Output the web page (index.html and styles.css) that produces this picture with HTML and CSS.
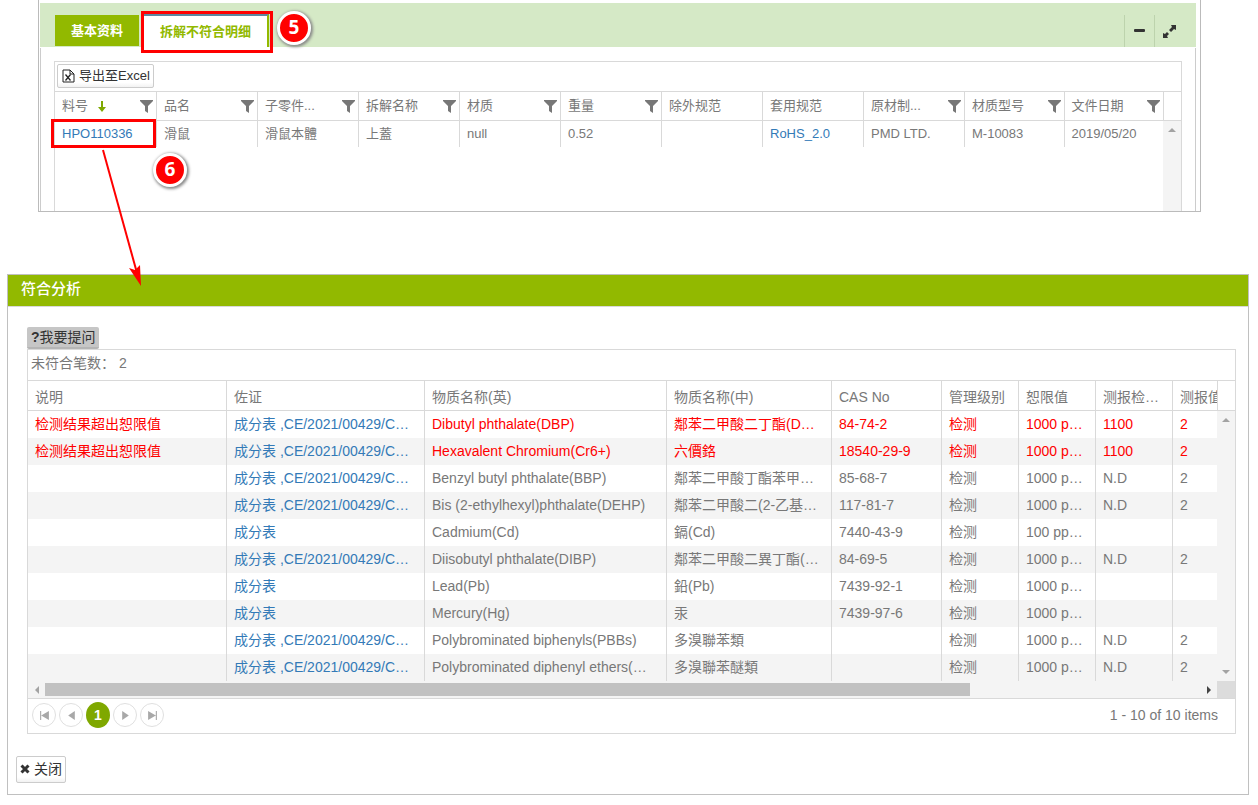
FILE: index.html
```html
<!DOCTYPE html>
<html lang="zh-CN">
<head>
<meta charset="utf-8">
<title>符合分析</title>
<link rel="stylesheet" href="styles.css">
</head>
<body>
<svg class="defs" aria-hidden="true">
  <symbol id="funnel" viewBox="0 0 13 13"><path d="M0 0h13v1L8 6v7L5 11V6L0 1z"/></symbol>
</svg>
<main class="page">
  <section class="detail">
    <header class="detail-head">
      <nav class="tabs">
        <button class="tab" type="button">基本资料</button>
        <button class="tab active" type="button">拆解不符合明细</button>
      </nav>
      <div class="tools">
        <button class="tool" type="button" aria-label="Minimize"><svg width="12" height="12" viewBox="0 0 12 12"><rect x="0" y="4" width="11" height="3" rx="1"/></svg></button>
        <button class="tool" type="button" aria-label="Expand"><svg width="13" height="13" viewBox="0 0 13 13"><path d="M8 0h5v5l-2-1-3 3-2-2 3-3zM5 13H0V8l2 1 2-2 2 2-2 2z"/></svg></button>
      </div>
    </header>
    <div class="detail-body">
      <div class="grid small">
        <div class="toolbar"><button class="btn" type="button"><svg width="13" height="14" viewBox="0 0 13 14"><path d="M1 1h7l4 4v8H1zM8 1v4h4" fill="#fff" stroke="#222"/><path d="M3.500 5.500l5 6M8.500 5.500l-5 6" stroke="#222" stroke-width="1.300"/></svg>导出至Excel</button></div>
        <div class="grid-main">
          <table>
            <thead><tr>
              <th><div class="th"><span>料号</span><svg class="sort" width="8" height="11" viewBox="0 0 8 11"><path d="M3 0h2v6h3L4 11 0 6h3z"/></svg><svg class="funnel"><use href="#funnel"/></svg></div></th>
              <th><div class="th"><span>品名</span><svg class="funnel"><use href="#funnel"/></svg></div></th>
              <th><div class="th"><span>子零件...</span><svg class="funnel"><use href="#funnel"/></svg></div></th>
              <th><div class="th"><span>拆解名称</span><svg class="funnel"><use href="#funnel"/></svg></div></th>
              <th><div class="th"><span>材质</span><svg class="funnel"><use href="#funnel"/></svg></div></th>
              <th><div class="th"><span>重量</span><svg class="funnel"><use href="#funnel"/></svg></div></th>
              <th><div class="th"><span>除外规范</span></div></th>
              <th><div class="th"><span>套用规范</span></div></th>
              <th><div class="th"><span>原材制...</span><svg class="funnel"><use href="#funnel"/></svg></div></th>
              <th><div class="th"><span>材质型号</span><svg class="funnel"><use href="#funnel"/></svg></div></th>
              <th><div class="th"><span>文件日期</span><svg class="funnel"><use href="#funnel"/></svg></div></th>
            </tr></thead>
            <tbody><tr>
              <td><a href="#analysis">HPO110336</a></td><td>滑鼠</td><td>滑鼠本體</td><td>上蓋</td><td>null</td><td>0.52</td><td></td><td><a href="#rohs">RoHS_2.0</a></td><td>PMD LTD.</td><td>M-10083</td><td>2019/05/20</td>
            </tr></tbody>
          </table>
          <div class="scroll"><div class="scroll-head"></div><div class="track"><i class="up"></i></div></div>
        </div>
      </div>
    </div>
  </section>

  <section class="analysis" id="analysis">
    <h1>符合分析</h1>
    <div class="analysis-body">
      <button class="ask" type="button"><b>?</b>我要提问</button>
      <div class="grid large">
        <div class="toolbar">未符合笔数： 2</div>
        <div class="grid-main">
          <table>
            <colgroup><col class="w-note"><col class="w-proof"><col class="w-en"><col class="w-zh"><col class="w-cas"><col class="w-s"><col class="w-s"><col class="w-s"><col></colgroup>
            <thead><tr><th>说明</th><th>佐证</th><th>物质名称(英)</th><th>物质名称(中)</th><th>CAS No</th><th>管理级别</th><th>恕限值</th><th>测报检…</th><th class="cut">测报值</th></tr></thead>
            <tbody>
              <tr class="bad"><td>检测结果超出恕限值</td><td><a href="#p1">成分表 ,CE/2021/00429/C…</a></td><td>Dibutyl phthalate(DBP)</td><td>鄰苯二甲酸二丁酯(D…</td><td>84-74-2</td><td>检测</td><td>1000 p…</td><td>1100</td><td>2</td></tr>
              <tr class="bad"><td>检测结果超出恕限值</td><td><a href="#p2">成分表 ,CE/2021/00429/C…</a></td><td>Hexavalent Chromium(Cr6+)</td><td>六價鉻</td><td>18540-29-9</td><td>检测</td><td>1000 p…</td><td>1100</td><td>2</td></tr>
              <tr><td></td><td><a href="#p3">成分表 ,CE/2021/00429/C…</a></td><td>Benzyl butyl phthalate(BBP)</td><td>鄰苯二甲酸丁酯苯甲…</td><td>85-68-7</td><td>检测</td><td>1000 p…</td><td>N.D</td><td>2</td></tr>
              <tr><td></td><td><a href="#p4">成分表 ,CE/2021/00429/C…</a></td><td>Bis (2-ethylhexyl)phthalate(DEHP)</td><td>鄰苯二甲酸二(2-乙基…</td><td>117-81-7</td><td>检测</td><td>1000 p…</td><td>N.D</td><td>2</td></tr>
              <tr><td></td><td><a href="#p5">成分表</a></td><td>Cadmium(Cd)</td><td>鎘(Cd)</td><td>7440-43-9</td><td>检测</td><td>100 pp…</td><td></td><td></td></tr>
              <tr><td></td><td><a href="#p6">成分表 ,CE/2021/00429/C…</a></td><td>Diisobutyl phthalate(DIBP)</td><td>鄰苯二甲酸二異丁酯(…</td><td>84-69-5</td><td>检测</td><td>1000 p…</td><td>N.D</td><td>2</td></tr>
              <tr><td></td><td><a href="#p7">成分表</a></td><td>Lead(Pb)</td><td>鉛(Pb)</td><td>7439-92-1</td><td>检测</td><td>1000 p…</td><td></td><td></td></tr>
              <tr><td></td><td><a href="#p8">成分表</a></td><td>Mercury(Hg)</td><td>汞</td><td>7439-97-6</td><td>检测</td><td>1000 p…</td><td></td><td></td></tr>
              <tr><td></td><td><a href="#p9">成分表 ,CE/2021/00429/C…</a></td><td>Polybrominated biphenyls(PBBs)</td><td>多溴聯苯類</td><td></td><td>检测</td><td>1000 p…</td><td>N.D</td><td>2</td></tr>
              <tr><td></td><td><a href="#p10">成分表 ,CE/2021/00429/C…</a></td><td>Polybrominated diphenyl ethers(…</td><td>多溴聯苯醚類</td><td></td><td>检测</td><td>1000 p…</td><td>N.D</td><td>2</td></tr>
            </tbody>
          </table>
          <div class="scroll"><div class="scroll-head"></div><div class="track"><i class="up"></i><i class="down"></i></div></div>
        </div>
        <div class="hscroll"><i class="left"></i><div class="rail"><div class="thumb"></div></div><i class="right"></i><div class="corner"></div></div>
        <footer class="pager">
          <button type="button" aria-label="First"><svg viewBox="0 0 10 10"><path d="M1 1h1v8H1zM9 1v8L2 5z"/></svg></button>
          <button type="button" aria-label="Previous"><svg viewBox="0 0 10 10"><path d="M8 1v8L2 5z"/></svg></button>
          <button type="button" class="current">1</button>
          <button type="button" aria-label="Next"><svg viewBox="0 0 10 10"><path d="M2 1v8l6-4z"/></svg></button>
          <button type="button" aria-label="Last"><svg viewBox="0 0 10 10"><path d="M1 1v8l7-4zM8 1h1v8H8z"/></svg></button>
          <span class="info">1 - 10 of 10 items</span>
        </footer>
      </div>
    </div>
    <button class="btn close" type="button"><svg width="10" height="10" viewBox="0 0 10 10"><path d="M1.500 1.500l7 7M8.500 1.500l-7 7" stroke="#333" stroke-width="3"/></svg>关闭</button>
  </section>

  <div class="mark mark-tab"></div>
  <div class="mark mark-cell"></div>
  <span class="badge five">5</span>
  <span class="badge six">6</span>
  <svg class="arrow" width="50" height="140" viewBox="0 0 50 140"><path d="M6 1L40 124" stroke="red" stroke-width="2"/><path d="M44 137L32 119L38 121L43 116z" fill="red"/></svg>
</main>
</body>
</html>
```
FILE: styles.css
```css
* { box-sizing: border-box; }
body { margin: 0; background: #fff; color: #787878; font: 14px/20px "Liberation Sans", "Noto Sans CJK SC", sans-serif; }
button { font: inherit; color: #333; margin: 0; padding: 0; border: 0; background: none; }
a { color: #337ab7; text-decoration: none; }
.defs { position: absolute; width: 0; height: 0; }
.page { position: relative; padding: 0 9px 10px 7px; }

.detail { margin: 0 48px 0 31px; padding: 3px 4px 0 1px; border: 1px solid #bbb; border-top: 0; font-size: 13px; }
.detail-head { display: flex; align-items: flex-end; justify-content: space-between; height: 44px; padding-left: 15px; background: #d5e9c6; }
.tabs { display: flex; align-items: flex-end; gap: 5px; }
.tab { height: 31px; margin-bottom: 1px; padding: 0 16px; background: #92b900; color: #fff; font-weight: bold; }
.tab.active { height: 33px; margin-bottom: 0; border-top: 2px solid #5d87a0; border-right: 2px solid #92b900; background: #fff; color: #92b900; }
.tools { display: flex; padding-right: 12px; }
.tool { display: flex; align-items: center; justify-content: center; width: 30px; height: 32px; border-left: 1px solid #bdd3ad; }
.tool svg { fill: #333; }
.detail-body { margin-top: 1px; padding: 13px 13px 0; border: 1px solid #ccc; border-width: 0 1px; }

.grid { border: 1px solid #d9d9d9; }
.grid-main { display: flex; }
table { flex: 1; width: 0; table-layout: fixed; border-collapse: separate; border-spacing: 0; }
th, td { padding: 0 7px; text-align: left; font-weight: normal; white-space: nowrap; overflow: hidden; text-overflow: ellipsis; border-left: 1px solid #d9d9d9; }
th:first-child, td:first-child { border-left: 0; }
th { border-bottom: 1px solid #d9d9d9; }
.scroll { display: flex; flex-direction: column; width: 18px; }
.scroll-head { border: 1px solid #d9d9d9; border-width: 0 0 1px 1px; }
.track { flex: 1; display: flex; flex-direction: column; align-items: center; justify-content: space-between; padding: 7px 0; background: #f4f4f4; }
.up, .down { border: 4px solid transparent; border-top-width: 0; border-bottom-color: #a3a3a3; }
.down { border-width: 4px 4px 0; border-color: #a3a3a3 transparent transparent; }

.small { border-bottom: 0; }
.small .toolbar { display: flex; height: 30px; padding: 2px; border-bottom: 1px solid #d9d9d9; }
.small .grid-main { height: 119px; align-items: flex-start; }
.small .scroll { align-self: stretch; }
.small .scroll-head { height: 29px; }
.small th { width: 101px; height: 29px; padding-right: 3px; }
.small th:nth-last-child(-n+2) { width: auto; }
.small td { height: 26px; }
.th { display: flex; align-items: center; }
.funnel { width: 13px; height: 13px; margin-left: auto; fill: #777; }
.sort { margin-left: 10px; fill: #7fa800; }
.btn { display: flex; align-items: center; gap: 4px; height: 24px; padding: 0 3px 0 4px; border: 1px solid #ccc; border-radius: 2px; background: linear-gradient(#fff 80%, #f2f2f2); fill: none; }
.small .btn { font-size: 13px; }

.analysis { margin-top: 62px; border: 1px solid #c0c0c0; }
h1 { height: 32px; margin: 0; padding: 0 13px; border-bottom: 1px solid #d9d9d9; background: #92b900; color: #fff; font-size: 15px; font-weight: 500; line-height: 28px; }
.analysis-body { padding: 20px 12px 22px 19px; }
.ask { display: block; height: 22px; padding: 0 3px 0 4px; border-bottom: 2px solid #b5b5b5; border-radius: 2px; background: #c6c6c6; }
.large .toolbar { height: 31px; padding: 3px; border-bottom: 1px solid #d9d9d9; }
.large th { height: 30px; padding-top: 3px; }
.large td { height: 27px; padding-bottom: 2px; }
.large tbody tr:nth-child(even) { background: #f4f4f4; }
.large .bad td:not(:nth-child(2)) { color: red; }
.large .cut { text-overflow: clip; padding-right: 0; }
.large .scroll-head { height: 30px; }
.w-note { width: 198px; } .w-proof { width: 198px; } .w-en { width: 242px; } .w-zh { width: 165px; } .w-cas { width: 110px; } .w-s { width: 77px; }
.hscroll { display: flex; align-items: center; height: 17px; padding-left: 7px; background: #f4f4f4; }
.rail { flex: 1; margin: 0 6px; }
.thumb { width: 80%; height: 13px; background: #c1c1c1; }
.left, .right { border: 4px solid transparent; border-left-width: 0; border-right-color: #a3a3a3; }
.right { border-width: 4px 0 4px 4px; border-color: transparent transparent transparent #444; margin-right: 6px; }
.corner { width: 18px; height: 17px; background: #dcdcdc; }
.pager { display: flex; align-items: center; gap: 3px; height: 35px; padding: 0 17px 2px 4px; border-top: 1px solid #d9d9d9; }
.pager button { display: flex; align-items: center; justify-content: center; width: 24px; height: 24px; border: 1px solid #e0e0e0; border-radius: 50%; }
.pager svg { width: 11px; height: 11px; fill: #a8a8a8; }
.pager .current { height: 26px; border: 0; background: #7fa800; color: #fff; font-weight: bold; }
.info { margin-left: auto; }
.close { height: 27px; margin: 0 0 11px 8px; padding: 0 3px 2px; }

.mark { position: absolute; border: 3px solid red; }
.mark-tab { left: 141px; top: 11px; width: 132px; height: 42px; }
.mark-cell { left: 51px; top: 119px; width: 105px; height: 29px; }
.badge { position: absolute; width: 34px; height: 34px; border: 3px solid #fff; border-radius: 50%; background: red; color: #fff; box-shadow: 1px 1px 3px 1px #888; font: bold 19px/27px "Open Sans", sans-serif; text-align: center; }
.five { left: 277px; top: 11px; }
.six { left: 153px; top: 153px; }
.arrow { position: absolute; left: 97px; top: 149px; }
```
